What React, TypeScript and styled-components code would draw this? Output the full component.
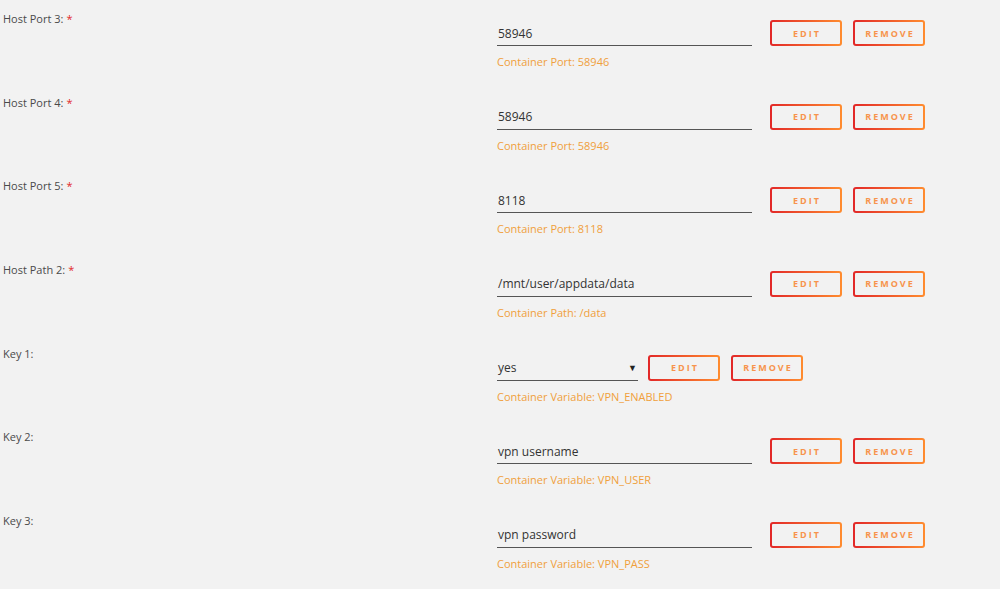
import React from "react";
import styled, { createGlobalStyle } from "styled-components";

const Global = createGlobalStyle`
  html, body { margin: 0; padding: 0; background: #f2f2f2; }
  body { font-family: "Open Sans", "Noto Sans", sans-serif; color: #4f4f4f; }
`;

const Page = styled.div`
  width: 1000px;
  height: 589px;
  overflow: hidden;
  background: #f2f2f2;
`;

const Row = styled.div`
  display: flex;
  align-items: flex-start;
  height: 83.67px;
`;

const Label = styled.div`
  width: 497px;
  padding-left: 3px;
  margin-top: 9px;
  line-height: 20px;
  font-size: 11px;
  color: #4a4a4a;
  box-sizing: border-box;
`;

const Req = styled.span`
  color: #e22828;
  margin-left: 3px;
`;

const Value = styled.div`
  margin-top: 20px;
  display: flex;
  flex-direction: column;
`;

const Controls = styled.div`
  display: flex;
  align-items: center;
  height: 26px;
`;

const TextInput = styled.div<{ $w: number; $gap: number }>`
  width: ${(p) => p.$w}px;
  height: 26px;
  margin-right: ${(p) => p.$gap}px;
  border-bottom: 1px solid #555;
  box-sizing: border-box;
  display: flex;
  align-items: center;
  justify-content: space-between;
  padding-left: 1px;
  padding-top: 1px;
  font-size: 12px;
  color: #333;
`;

const Arrow = styled.span`
  font-size: 9px;
  color: #222;
  margin-right: 1px;
`;

const Button = styled.div`
  width: 72px;
  height: 26px;
  box-sizing: border-box;
  border: 2px solid transparent;
  border-radius: 3px;
  background: linear-gradient(#f2f2f2, #f2f2f2) padding-box,
    linear-gradient(90deg, #e22828, #ff8c2f) border-box;
  display: flex;
  align-items: center;
  justify-content: center;
  font-size: 9px;
  font-weight: 700;
  letter-spacing: 2px;
  color: #f7944c;
  margin-right: 11px;
  padding-left: 2px;
`;

const Help = styled.div`
  margin-top: 8px;
  line-height: 16px;
  font-size: 11px;
  color: #f0a03c;
  padding-left: 0px;
`;

type Item = {
  label: string;
  required?: boolean;
  value: string;
  help: string;
  select?: boolean;
};

const items: Item[] = [
  { label: "Host Port 3:", required: true, value: "58946", help: "Container Port: 58946" },
  { label: "Host Port 4:", required: true, value: "58946", help: "Container Port: 58946" },
  { label: "Host Port 5:", required: true, value: "8118", help: "Container Port: 8118" },
  { label: "Host Path 2:", required: true, value: "/mnt/user/appdata/data", help: "Container Path: /data" },
  { label: "Key 1:", value: "yes", help: "Container Variable: VPN_ENABLED", select: true },
  { label: "Key 2:", value: "vpn username", help: "Container Variable: VPN_USER" },
  { label: "Key 3:", value: "vpn password", help: "Container Variable: VPN_PASS" },
];

export default function App() {
  return (
    <Page>
      <Global />
      {items.map((it) => (
        <Row key={it.label}>
          <Label>
            {it.label}
            {it.required && <Req>*</Req>}
          </Label>
          <Value>
            <Controls>
              <TextInput $w={it.select ? 141 : 255} $gap={it.select ? 10 : 18}>
                <span>{it.value}</span>
                {it.select && <Arrow>▼</Arrow>}
              </TextInput>
              <Button>EDIT</Button>
              <Button>REMOVE</Button>
            </Controls>
            <Help>{it.help}</Help>
          </Value>
        </Row>
      ))}
    </Page>
  );
}
